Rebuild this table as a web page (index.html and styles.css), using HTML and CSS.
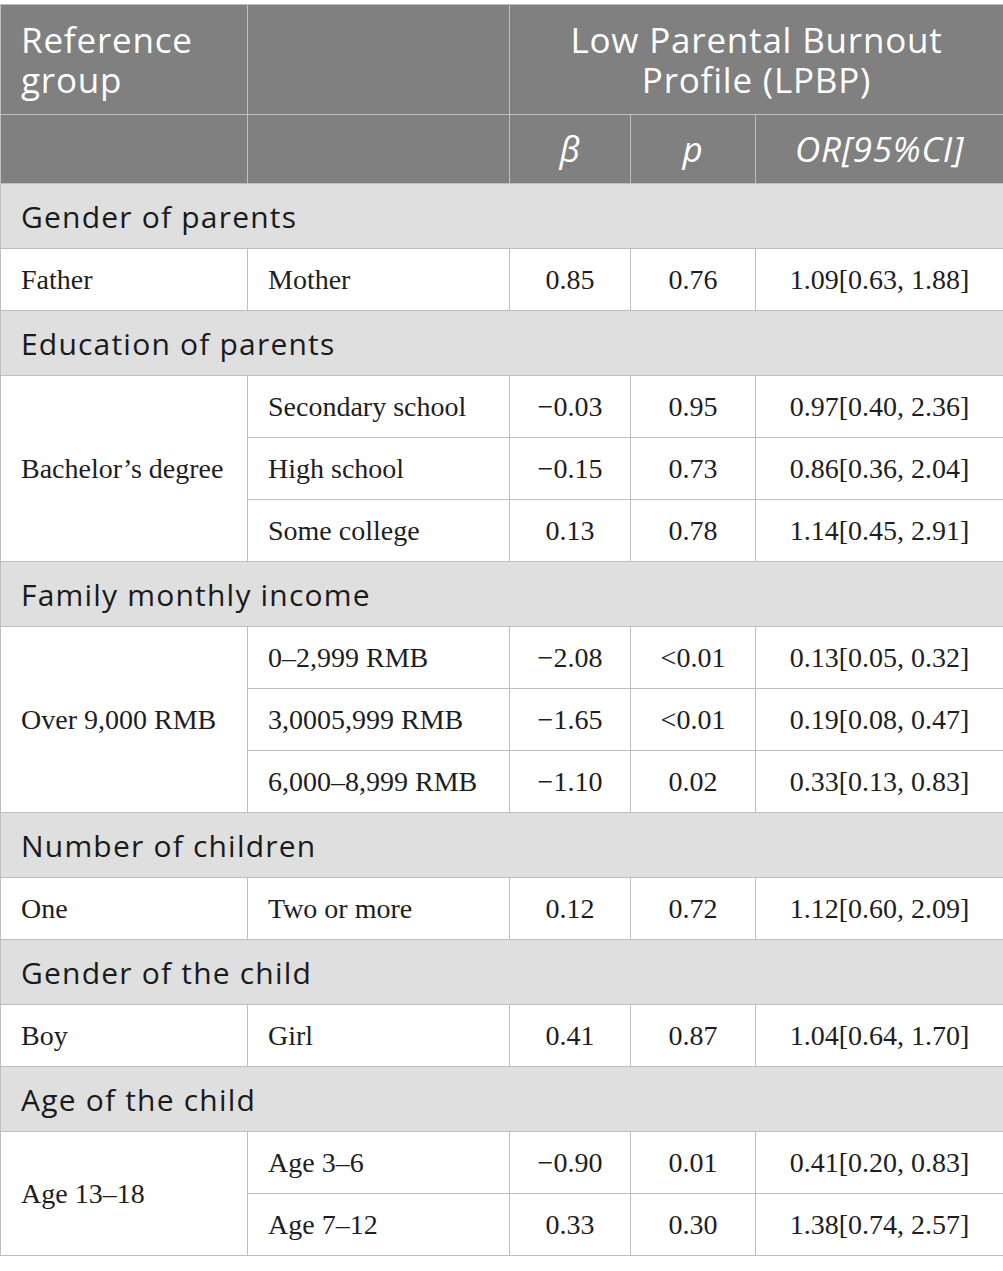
FILE: index.html
```html
<!DOCTYPE html>
<html lang="en">
<head>
<meta charset="utf-8">
<title>Table</title>
<link rel="stylesheet" href="styles.css">
</head>
<body>
<table class="tbl">
  <colgroup>
    <col class="c1"><col class="c2"><col class="c3"><col class="c4"><col class="c5">
  </colgroup>
  <thead>
    <tr class="h1">
      <th class="left">Reference group</th>
      <th></th>
      <th colspan="3" class="center">Low Parental Burnout Profile (LPBP)</th>
    </tr>
    <tr class="h2">
      <th></th>
      <th></th>
      <th class="center it">β</th>
      <th class="center it">p</th>
      <th class="center it">OR[95%CI]</th>
    </tr>
  </thead>
  <tbody>
    <tr class="sec"><td colspan="5">Gender of parents</td></tr>
    <tr class="row"><td>Father</td><td>Mother</td><td class="num">0.85</td><td class="num">0.76</td><td class="num">1.09[0.63, 1.88]</td></tr>

    <tr class="sec"><td colspan="5">Education of parents</td></tr>
    <tr class="row"><td rowspan="3">Bachelor’s degree</td><td>Secondary school</td><td class="num">−0.03</td><td class="num">0.95</td><td class="num">0.97[0.40, 2.36]</td></tr>
    <tr class="row"><td>High school</td><td class="num">−0.15</td><td class="num">0.73</td><td class="num">0.86[0.36, 2.04]</td></tr>
    <tr class="row"><td>Some college</td><td class="num">0.13</td><td class="num">0.78</td><td class="num">1.14[0.45, 2.91]</td></tr>

    <tr class="sec"><td colspan="5">Family monthly income</td></tr>
    <tr class="row"><td rowspan="3">Over 9,000 RMB</td><td>0–2,999 RMB</td><td class="num">−2.08</td><td class="num">&lt;0.01</td><td class="num">0.13[0.05, 0.32]</td></tr>
    <tr class="row"><td>3,0005,999 RMB</td><td class="num">−1.65</td><td class="num">&lt;0.01</td><td class="num">0.19[0.08, 0.47]</td></tr>
    <tr class="row"><td>6,000–8,999 RMB</td><td class="num">−1.10</td><td class="num">0.02</td><td class="num">0.33[0.13, 0.83]</td></tr>

    <tr class="sec"><td colspan="5">Number of children</td></tr>
    <tr class="row"><td>One</td><td>Two or more</td><td class="num">0.12</td><td class="num">0.72</td><td class="num">1.12[0.60, 2.09]</td></tr>

    <tr class="sec"><td colspan="5">Gender of the child</td></tr>
    <tr class="row"><td>Boy</td><td>Girl</td><td class="num">0.41</td><td class="num">0.87</td><td class="num">1.04[0.64, 1.70]</td></tr>

    <tr class="sec"><td colspan="5">Age of the child</td></tr>
    <tr class="row"><td rowspan="2">Age 13–18</td><td>Age 3–6</td><td class="num">−0.90</td><td class="num">0.01</td><td class="num">0.41[0.20, 0.83]</td></tr>
    <tr class="row"><td>Age 7–12</td><td class="num">0.33</td><td class="num">0.30</td><td class="num">1.38[0.74, 2.57]</td></tr>
  </tbody>
</table>
</body>
</html>
```
FILE: styles.css
```css
html, body {
  margin: 0;
  padding: 0;
  background: #ffffff;
}
body {
  padding-top: 4px;
}
.tbl {
  border-collapse: collapse;
  table-layout: fixed;
  width: 1003px;
}
.c1 { width: 247px; }
.c2 { width: 262px; }
.c3 { width: 121px; }
.c4 { width: 125px; }
.c5 { width: 248px; }

.tbl th, .tbl td {
  border: 1px solid #bfbfbf;
  padding: 0 20px;
}
.tbl thead th {
  background: #7f807f;
  color: #ffffff;
  font-family: "Open Sans", "Noto Sans", sans-serif;
  font-weight: 400;
  font-size: 35px;
  letter-spacing: 0.8px;
  line-height: 40px;
  vertical-align: middle;
}
.tbl thead .h1 th {
  height: 109px;
}
.tbl thead .h2 th {
  height: 68px;
}
.left { text-align: left; }
.center { text-align: center; }
.it { font-style: italic; }

.sec td {
  background: #e0dfe0;
  color: #1a1a1a;
  font-family: "Open Sans", "Noto Sans", sans-serif;
  font-size: 30px;
  letter-spacing: 1.2px;
  height: 64px;
  vertical-align: middle;
}
.row td {
  height: 61px;
  font-family: "Liberation Serif", "DejaVu Serif", serif;
  font-size: 28px;
  color: #1e1e1e;
  vertical-align: middle;
}
.row td.num {
  text-align: center;
}
```
